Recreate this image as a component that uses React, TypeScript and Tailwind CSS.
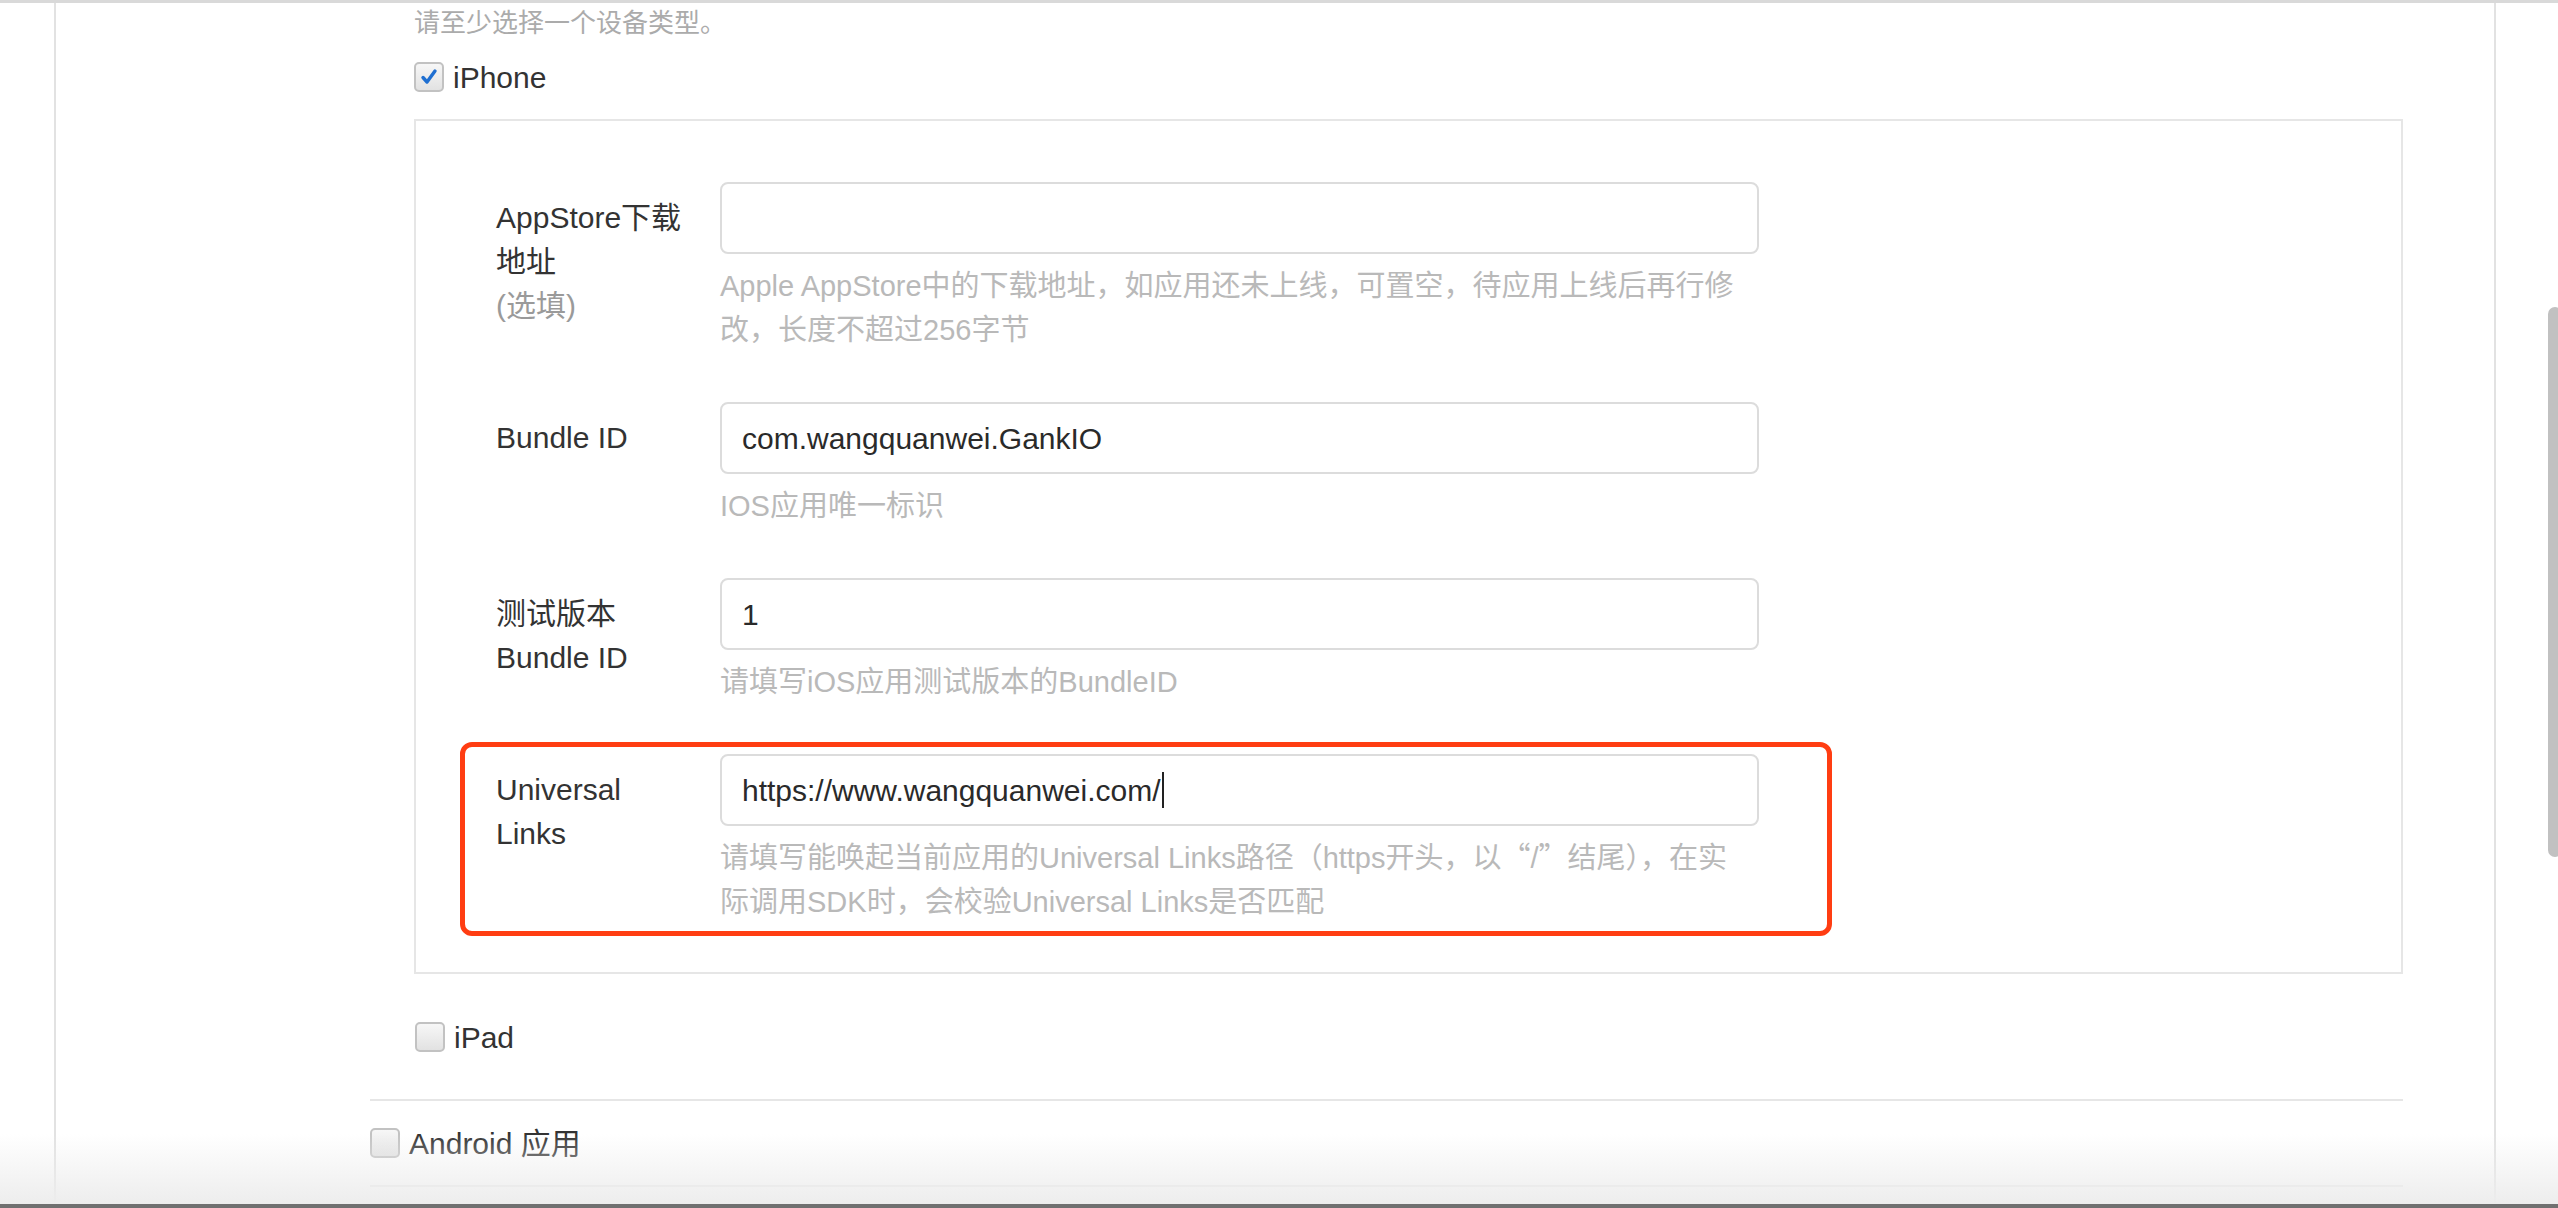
import type { ReactNode } from 'react';

const font = 'font-["Liberation_Sans","Noto_Sans_CJK_SC",sans-serif]';

type Field = {
  label: string[];
  optional?: boolean;
  value: string;
  help: ReactNode[];
  cursor?: boolean;
  marked?: boolean;
};

// full-width quotes come from the CJK face, like the original page
const q = (s: string) => <span className='font-["Noto_Sans_CJK_SC",sans-serif] leading-none'>{s}</span>;

const fields: Field[] = [
  {
    label: ['AppStore下载', '地址'],
    optional: true,
    value: '',
    help: ['Apple AppStore中的下载地址，如应用还未上线，可置空，待应用上线后再行修', '改，长度不超过256字节'],
  },
  { label: ['Bundle ID'], value: 'com.wangquanwei.GankIO', help: ['IOS应用唯一标识'] },
  { label: ['测试版本', 'Bundle ID'], value: '1', help: ['请填写iOS应用测试版本的BundleID'] },
  {
    label: ['Universal', 'Links'],
    value: 'https://www.wangquanwei.com/',
    cursor: true,
    marked: true,
    help: [
      <>
        请填写能唤起当前应用的Universal Links路径（https开头，以{q('“')}/{q('”')}结尾），在实
      </>,
      '际调用SDK时，会校验Universal Links是否匹配',
    ],
  },
];

function Checkbox({ checked = false }: { checked?: boolean }) {
  return (
    <span className="flex h-[30px] w-[30px] shrink-0 items-center justify-center rounded-[5px] border-2 border-[#c2c2c2] bg-gradient-to-b from-[#f7f7f7] to-[#e2e2e2]">
      {checked && (
        <svg viewBox="0 0 20 20" className="h-[20px] w-[20px]">
          <path d="M4 10.5 L8 15 L16 4" fill="none" stroke="#1f6fd1" strokeWidth="3.4" strokeLinecap="round" strokeLinejoin="round" />
        </svg>
      )}
    </span>
  );
}

function CheckRow({ label, checked }: { label: string; checked?: boolean }) {
  return (
    <label className="flex h-[44px] items-center gap-[9px] text-[30px] text-[#333]">
      <Checkbox checked={checked} />
      <span>{label}</span>
    </label>
  );
}

function FieldRow({ field }: { field: Field }) {
  return (
    <div className="relative mb-[50px] flex last:mb-0">
      {field.marked && (
        <div className="pointer-events-none absolute left-[-36px] top-[-12px] h-[194px] w-[1372px] rounded-[12px] border-[5px] border-[#ff3d12]" />
      )}
      <div className="w-[224px] shrink-0 pt-[14px] text-[30px] leading-[44px] text-[#333]">
        {field.label.map((l) => (
          <div key={l}>{l}</div>
        ))}
        {field.optional && <div className="text-[#9a9a9a]">(选填)</div>}
      </div>
      <div className="w-[1039px]">
        <div className="flex h-[72px] items-center rounded-[8px] border-2 border-[#dcdcdc] bg-white pl-[20px] text-[30px] text-[#2a2a2a]">
          <span>{field.value}</span>
          {field.cursor && <span className="ml-[1px] inline-block h-[36px] w-[2px] bg-[#222]" />}
        </div>
        <div className="mt-[10px] text-[29px] leading-[44px] text-[#b9b9b9]">
          {field.help.map((h, i) => (
            <div key={i} className="h-[44px] overflow-visible whitespace-nowrap">
              {h}
            </div>
          ))}
        </div>
      </div>
    </div>
  );
}

export default function App() {
  return (
    <div className={`relative flex h-[1208px] w-[2558px] flex-col overflow-hidden bg-white ${font}`}>
      <div className="h-[3px] bg-[#d9d9d9]" />
      <div className="flex h-[1201px]">
        <div className="w-[54px]" />
        <div className="w-[2442px] border-x-2 border-[#e2e2e2] pl-[314px]">
          <div className="w-[2033px]">
            <div className="ml-[44px]">
              <div className="text-[26px] leading-[40px] text-[#ababab]">请至少选择一个设备类型。</div>
              <div className="mt-[12px]">
                <CheckRow label="iPhone" checked />
              </div>
              <div className="mt-[20px] border-2 border-[#e6e6e6] pb-[48px] pl-[80px] pt-[61px]">
                {fields.map((f) => (
                  <FieldRow key={f.value + f.label[0]} field={f} />
                ))}
              </div>
              <div className="mt-[41px] pl-[1px]">
                <CheckRow label="iPad" />
              </div>
            </div>
            <div className="mt-[40px] h-[2px] bg-[#e6e6e6]" />
            <div className="mt-[20px]">
              <CheckRow label="Android 应用" />
            </div>
            <div className="mt-[20px] h-[2px] bg-[#e6e6e6]" />
          </div>
        </div>
        <div className="w-[62px] pl-[52px] pt-[304px]">
          <div className="h-[550px] w-[14px] rounded-[7px] bg-[#c1c1c1]" />
        </div>
      </div>
      <div className="pointer-events-none absolute bottom-[4px] left-0 right-0 h-[70px] bg-gradient-to-b from-white/0 to-[#ededed]" />
      <div className="h-[4px] bg-[#707070]" />
    </div>
  );
}
